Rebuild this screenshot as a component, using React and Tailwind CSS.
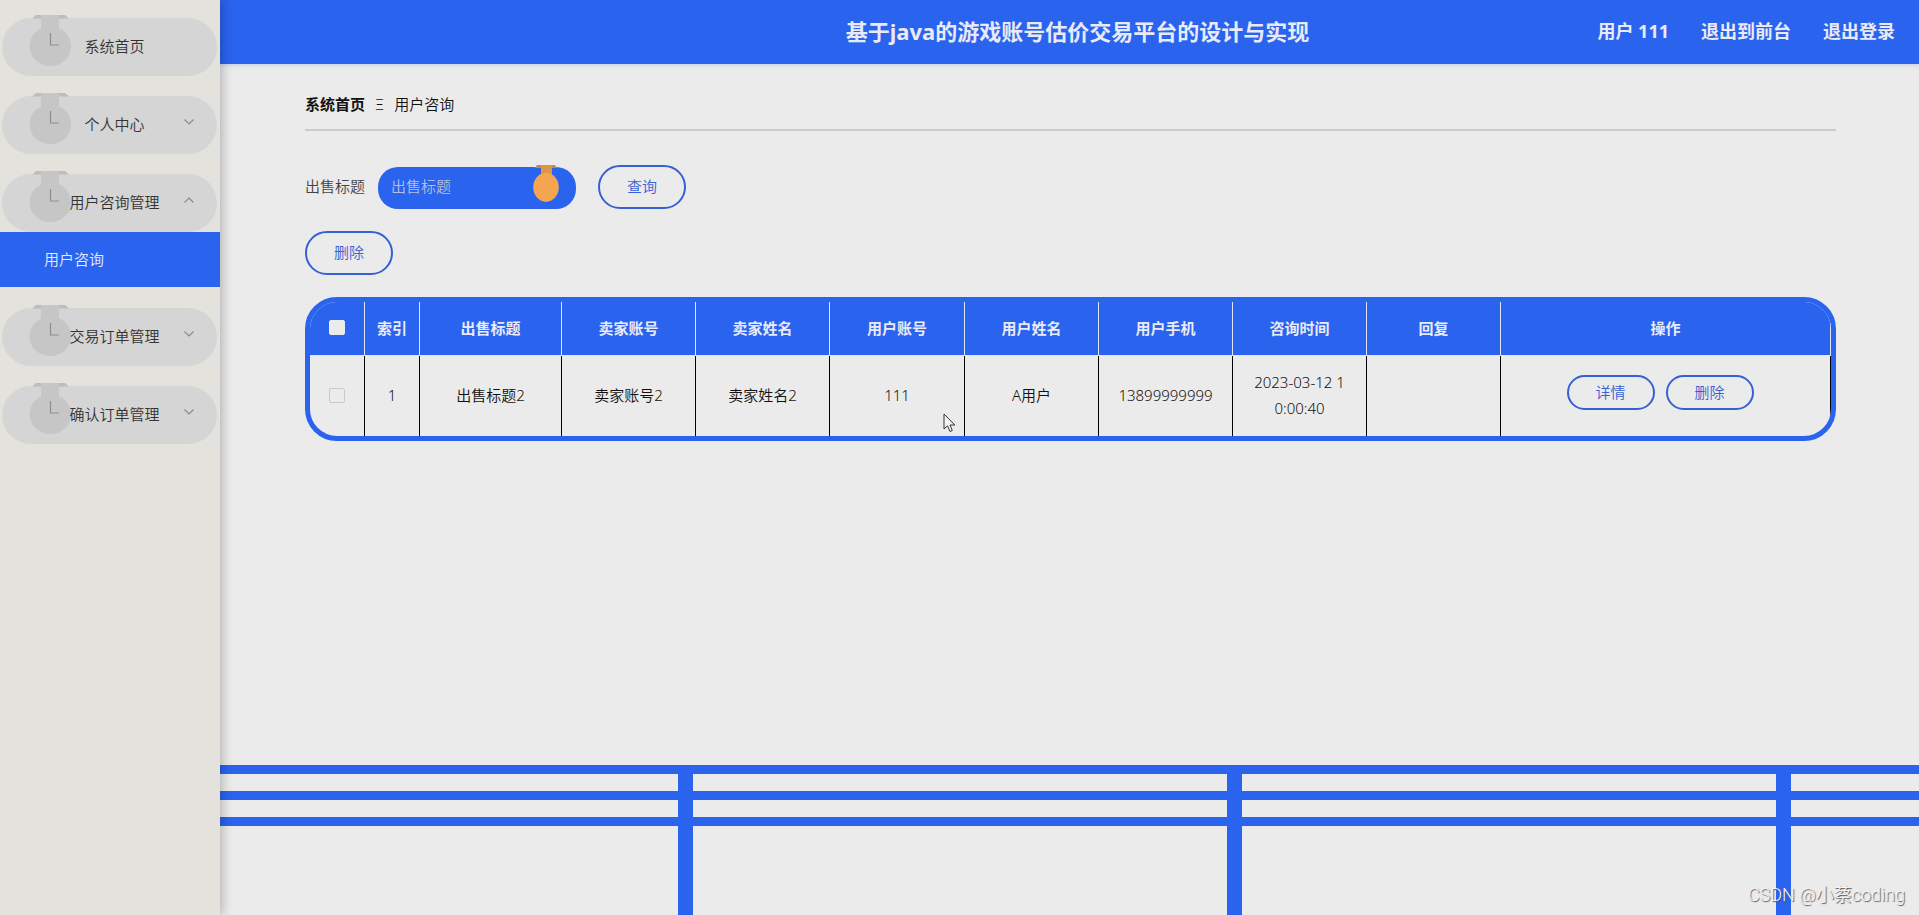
import React, { useState } from 'react';

const MENU = [
  { title: '系统首页' },
  { title: '个人中心', children: ['个人信息'] },
  { title: '用户咨询管理', children: ['用户咨询'] },
  { title: '交易订单管理', children: ['交易订单'] },
  { title: '确认订单管理', children: ['确认订单'] },
];

const COLUMNS = [
  { key: 'title', label: '出售标题', width: 'w-[142px]' },
  { key: 'sellerAccount', label: '卖家账号', width: 'w-[134px]' },
  { key: 'sellerName', label: '卖家姓名', width: 'w-[134px]' },
  { key: 'userAccount', label: '用户账号', width: 'w-[135px]' },
  { key: 'userName', label: '用户姓名', width: 'w-[134px]' },
  { key: 'phone', label: '用户手机', width: 'w-[134px]' },
  { key: 'time', label: '咨询时间', width: 'w-[134px]' },
  { key: 'reply', label: '回复', width: 'w-[134px]' },
];

const ROWS = [
  {
    id: 1,
    title: '出售标题2',
    sellerAccount: '卖家账号2',
    sellerName: '卖家姓名2',
    userAccount: '111',
    userName: 'A用户',
    phone: '13899999999',
    time: '2023-03-12 10:00:40',
    reply: '',
  },
];

// --- ICONS ---
const WatchIcon = () => (
  <svg className="absolute left-[27px] -top-[3px]" width="43" height="52" viewBox="0 0 43 52" aria-hidden="true">
    <path d="M3 3.5 L7 0 H36 L40 3.5 Z" fill="#bdbdbc" />
    <rect x="12" y="0" width="18" height="18" fill="#c6c6c6" />
    <ellipse cx="21.3" cy="31.3" rx="20.8" ry="19.8" fill="#c6c6c6" />
    <path d="M21.5 18 V30 H30" fill="none" stroke="#8f8f8f" strokeWidth="1.2" />
  </svg>
);

const Chevron = ({ open }) => (
  <svg className="absolute right-[23px] top-[22px]" width="10" height="8" viewBox="0 0 10 8" aria-hidden="true">
    <path d={open ? 'M0.5 6.5 L5 2 L9.5 6.5' : 'M0.5 1.5 L5 6 L9.5 1.5'} fill="none" stroke="#8a8a8a" strokeWidth="1.1" />
  </svg>
);

const MedalIcon = () => (
  <svg className="absolute right-[17px] -top-[2px]" width="26" height="37" viewBox="0 0 26 37" aria-hidden="true">
    <path d="M2 3 L4 0 H22 L24 3 Z" fill="#c98a3e" />
    <rect x="8" y="0" width="11" height="12" fill="#dc9645" />
    <ellipse cx="13" cy="22.3" rx="12.8" ry="14.6" fill="#f4a550" />
  </svg>
);

const Cursor = () => (
  <svg className="absolute left-[943px] top-[413px]" width="13" height="20" viewBox="0 0 13 20" aria-hidden="true">
    <path d="M1 1 V16 L4.5 12.8 L7 18.5 L9.3 17.5 L7 12 H11.8 Z" fill="#f4f4f4" stroke="#333" strokeWidth="1" />
  </svg>
);

const OutlineButton = ({ small, children }) => (
  <button
    type="button"
    className={
      small
        ? 'w-[88px] h-[35px] mr-[11px] mb-1.5 rounded-full border-2 border-[#3561d4] text-[#3561d4] leading-[30px]'
        : 'w-[88px] h-11 rounded-full border-2 border-[#3561d4] pb-0.5 text-[#3561d4]'
    }
  >
    {children}
  </button>
);

function Sidebar() {
  const [open, setOpen] = useState('用户咨询管理');

  return (
    <aside className="relative z-10 w-[220px] shrink-0 bg-[#e4e2dd] pt-[18px] shadow-[2px_0_10px_rgba(0,0,0,0.25)]">
      <nav>
        <ul className="flex flex-col gap-5">
          {MENU.map((item) => (
            <li key={item.title}>
              <button
                type="button"
                onClick={() => setOpen(open === item.title ? '' : item.title)}
                className="relative mx-0.5 flex h-[58px] w-[215px] items-center justify-center rounded-full bg-[#d5d5d5] pl-2.5 pb-0.5 text-[#333]"
              >
                <WatchIcon />
                <span className="relative">{item.title}</span>
                {item.children && <Chevron open={open === item.title} />}
              </button>

              {item.children && open === item.title && item.children.map((child) => (
                <a
                  key={child}
                  href="#consult"
                  className="mb-px flex h-[55px] items-center bg-[#2a63ee] pl-11 pb-0.5 text-[#e8eaf8]"
                >
                  {child}
                </a>
              ))}
            </li>
          ))}
        </ul>
      </nav>
    </aside>
  );
}

function Header() {
  return (
    <header className="flex h-16 items-center bg-[#2a63ee] pl-10 pr-6 pb-0.5 text-[#e8eaf8] font-bold shadow-[0_1px_4px_rgba(120,150,220,0.35)]">
      <div className="flex-1"></div>
      <h1 className="text-[22px] leading-8">基于java的游戏账号估价交易平台的设计与实现</h1>
      <div className="flex flex-1 justify-end gap-8 text-lg">
        <span>用户 111</span>
        <a href="#front">退出到前台</a>
        <a href="#logout">退出登录</a>
      </div>
    </header>
  );
}

function ConsultTable() {
  const box = 'block mx-auto h-[15px] w-4 appearance-none rounded-xs border';

  return (
    <div className="mt-[22px] overflow-hidden rounded-[32px] border-[5px] border-[#2a63ee]">
      <table className="w-full table-fixed border-separate border-spacing-0 text-center">
        <thead>
          <tr className="h-[54px] bg-[#2a63ee] text-[#e8eaf8] [&>th]:border-r [&>th]:border-b [&>th]:border-[#dfe6f8] [&>th]:pb-0.5">
            <th className="w-[55px]">
              <input type="checkbox" aria-label="全选" className={`${box} border-[#ebebeb] bg-[#ebebeb]`} />
            </th>
            <th className="w-[55px]">索引</th>
            {COLUMNS.map((col) => (
              <th key={col.key} className={col.width}>{col.label}</th>
            ))}
            <th>操作</th>
          </tr>
        </thead>
        <tbody>
          {ROWS.map((row) => (
            <tr key={row.id} className="h-20 text-[#111] leading-[26px] [&>td]:border-r [&>td]:border-black [&>td]:pb-0.5">
              <td>
                <input type="checkbox" aria-label="选择" className={`${box} border-[#c8cacf] bg-transparent`} />
              </td>
              <td>{row.id}</td>
              {COLUMNS.map((col) => (
                <td key={col.key} className="px-[18px] break-all">{row[col.key]}</td>
              ))}
              <td>
                <div className="flex justify-center">
                  <OutlineButton small>详情</OutlineButton>
                  <OutlineButton small>删除</OutlineButton>
                </div>
              </td>
            </tr>
          ))}
        </tbody>
      </table>
    </div>
  );
}

function Consult() {
  return (
    <main className="flex-1 pt-[27px] pl-[85px] pr-[83px]">

      <div className="flex h-10 items-start gap-2.5 border-b-2 border-[#cbcbcb] text-[#111]">
        <a href="#home" className="font-bold">系统首页</a>
        <span>Ξ</span>
        <span>用户咨询</span>
      </div>

      <form className="mt-[34px] flex items-center" onSubmit={(e) => e.preventDefault()}>
        <label htmlFor="title" className="w-[73px] pb-0.5 text-[#444]">出售标题</label>
        <div className="relative mt-0.5 mr-[22px]">
          <input
            id="title"
            type="text"
            placeholder="出售标题"
            className="block h-[42px] w-[198px] rounded-[20px] bg-[#2a63ee] pl-[13px] pr-12 pb-1 text-[#e8eaf8] outline-none placeholder:text-[#b4bfe2]"
          />
          <MedalIcon />
        </div>
        <OutlineButton>查询</OutlineButton>
      </form>

      <div className="mt-[22px]">
        <OutlineButton>删除</OutlineButton>
      </div>

      <ConsultTable />

    </main>
  );
}

// Blue lattice along the bottom of the page
const Lattice = () => (
  <div className="flex h-[150px] flex-col gap-[17px] bg-[repeating-linear-gradient(to_right,transparent_0_458px,#2a63ee_458px_473px,transparent_473px_549px)]">
    <div className="h-[9px] bg-[#2a63ee]"></div>
    <div className="h-[9px] bg-[#2a63ee]"></div>
    <div className="h-[9px] bg-[#2a63ee]"></div>
  </div>
);

function App() {
  return (
    <div className="relative flex min-h-screen bg-[#ebebeb] font-['Noto_Sans','Noto_Sans_CJK_SC',sans-serif] font-[350] text-[15px] leading-[26px]">

      <Sidebar />

      <div className="flex min-w-0 flex-1 flex-col">
        <Header />
        <Consult />
        <Lattice />
      </div>

      <Cursor />

      <div className="absolute bottom-1.5 right-3.5 text-lg text-[#f4f4f4] font-['Roboto','Noto_Sans_CJK_SC',sans-serif] [text-shadow:1px_1px_1px_#555]">
        CSDN @小蔡coding
      </div>

    </div>
  );
}

export default App;
